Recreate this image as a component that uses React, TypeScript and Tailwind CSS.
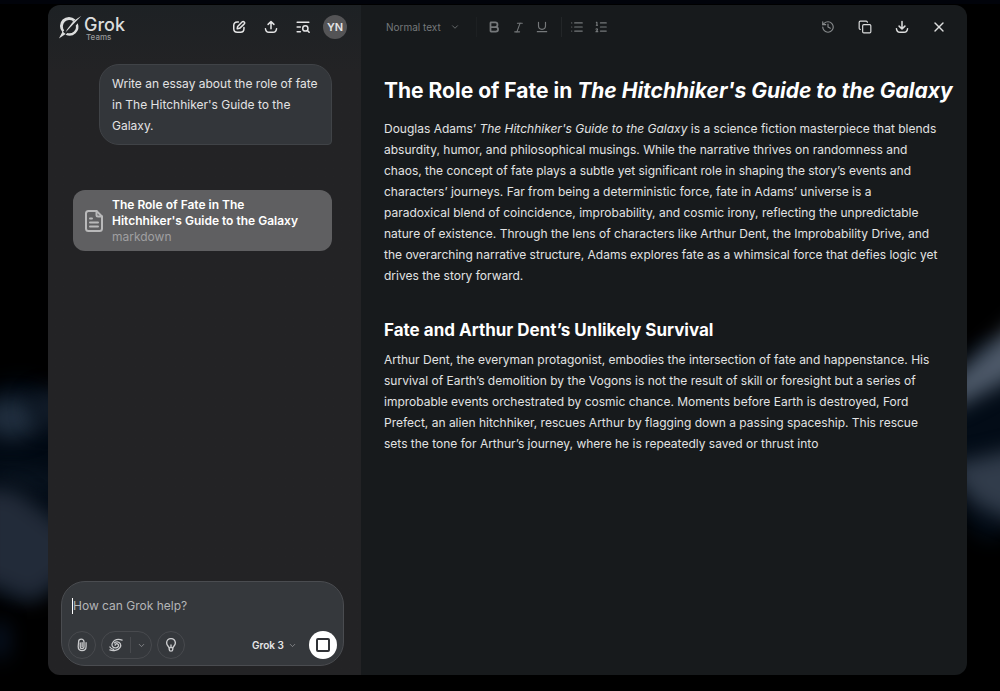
import type { ReactNode } from "react";
import { Bold, ChevronDown, Copy, History, Italic, List, ListOrdered, Underline, X } from "lucide-react";

interface IconButtonProps {
  label: string;
  className?: string;
  children: ReactNode;
}

const IconButton = ({ label, className = "size-4", children }: IconButtonProps) => (
  <button
    type="button"
    aria-label={label}
    className={`flex items-center justify-center shrink-0 ${className}`}
  >
    {children}
  </button>
);

const strokeProps = {
  viewBox: "0 0 24 24",
  fill: "none",
  stroke: "currentColor",
  strokeLinecap: "round" as const,
  strokeLinejoin: "round" as const,
};

const LogoIcon = () => (
  <svg viewBox="0 0 24 24" className="size-6" fill="currentColor" aria-hidden="true">
    <path d="M17.4 4.6A9 9 0 0 0 4.6 17.4L6.2 15.3A6.500 6.500 0 0 1 15.3 6.2Z" />
    <path d="M19.7 8.2A9 9 0 0 1 7.6 19.8L9.3 17.9A6.500 6.500 0 0 0 17.8 10.5Z" />
    <path d="M23.4.7 7.4 17.6 9.2 14.2 15.3 6.2Z" />
    <path d="M.9 23.4 4.6 16.6 7.6 19Z" />
  </svg>
);

const ComposeIcon = () => (
  <svg {...strokeProps} strokeWidth="2.6" className="size-3.5">
    <path d="M11 3.500H9C5 3.500 3 5.500 3 9.500V15C3 19 5 21 9 21H14.500C18.500 21 20.500 19 20.500 15V13" />
    <path d="M9 15 9.700 11 17.200 3.500C18.300 2.400 20 2.500 20.900 3.400S21.800 5.900 20.700 7L13 14.300Z" />
  </svg>
);

const ShareIcon = () => (
  <svg {...strokeProps} strokeWidth="2.6" className="size-3.5">
    <path d="M12 15V3M7 7.500 12 2.500 17 7.500" />
    <path d="M2.500 15C3 19.500 4.500 21 8.500 21H15.500C19.500 21 21 19.500 21.500 15" />
  </svg>
);

const DownloadIcon = () => (
  <svg {...strokeProps} strokeWidth="2.6" className="size-3.5">
    <path d="M12 2.500V15M7 10.500 12 15.500 17 10.500" />
    <path d="M2.500 15C3 19.500 4.500 21 8.500 21H15.500C19.500 21 21 19.500 21.500 15" />
  </svg>
);

const HistorySearchIcon = () => (
  <svg {...strokeProps} strokeWidth="2.6" className="size-3.5">
    <path d="M2 4H22M2 12H7.500M2 20H7.500" />
    <circle cx="16" cy="14.500" r="4.500" />
    <path d="M19.500 18 22.500 21" />
  </svg>
);

const DocumentIcon = () => (
  <svg {...strokeProps} viewBox="0 0 20 24" strokeWidth="2" className="h-6 w-5">
    <path d="M12.500 2H4.500A2.500 2.500 0 0 0 2 4.500V19.500A2.500 2.500 0 0 0 4.500 22H15.500A2.500 2.500 0 0 0 18 19.500V7.500Z" />
    <path d="M12.500 2V6A1.500 1.500 0 0 0 14 7.500H18" />
    <path d="M6 9.500H8M6 13.500H14M6 17.500H14" />
  </svg>
);

const PaperclipIcon = () => (
  <svg {...strokeProps} strokeWidth="2.2" className="size-3.5">
    <path d="M9 8.500V15A3.200 3.200 0 0 0 15.400 15V6.500A4.600 4.600 0 0 0 6.200 6.500L5.500 14.500C5.500 18.500 8 21.500 12 21.500S19 18.500 19 14.500V8" />
    <path d="M12.200 8V15" />
  </svg>
);

const SpiralIcon = () => (
  <svg {...strokeProps} strokeWidth="2.2" className="size-3.5">
    <path d="M22.500 3.500C16 1.500 9 3 6 8.500C3.500 13 7 17.500 12 17C16 16.500 17.500 12.500 15.500 10.700C13.500 9 10.500 10 10.500 12.500" />
    <path d="M1.500 20.500C7 22.500 15.500 22 19 16C21.800 11.500 19 7 14.500 6.500C12.500 6.400 10.500 7 9.300 8.500" />
    <path d="M1.500 15.500C3 18 5.500 19.200 8 19.500" />
  </svg>
);

const BulbIcon = () => (
  <svg {...strokeProps} strokeWidth="2.4" className="size-3.5">
    <path d="M8.500 16.500C8.500 14.500 4.500 13 4.500 8.500A7.500 7.500 0 0 1 19.500 8.500C19.500 13 15.500 14.500 15.500 16.500Z" />
    <path d="M9 17V19.500A3 3 0 0 0 15 19.500V17M12 16V12" />
  </svg>
);

const Clouds = () => (
  <svg
    viewBox="0 0 1000 691"
    preserveAspectRatio="none"
    className="absolute inset-0 size-full"
    aria-hidden="true"
  >
    <defs>
      <filter
        id="haze"
        x="-100%"
        y="-100%"
        width="300%"
        height="300%"
        colorInterpolationFilters="sRGB"
      >
        <feGaussianBlur stdDeviation="10" />
      </filter>
    </defs>
    <ellipse cx="20" cy="490" rx="70" ry="110" fill="#020a14" filter="url(#haze)" />
    <ellipse cx="12" cy="418" rx="28" ry="20" fill="#202e3e" filter="url(#haze)" />
    <ellipse cx="50" cy="408" rx="20" ry="18" fill="#121c29" filter="url(#haze)" />
    <path d="M-20 470H10L60 478V490L30 484Z" fill="#0f1b28" filter="url(#haze)" />
    <path d="M-20 488 15 490 75 535V570L32 602-20 580Z" fill="#222b39" filter="url(#haze)" />
    <ellipse cx="0" cy="640" rx="9" ry="20" fill="#081426" filter="url(#haze)" />
    <ellipse cx="990" cy="440" rx="40" ry="100" fill="#030c17" filter="url(#haze)" />
    <path d="M945 385 1025 314V372L950 410Z" fill="#4e5a6a" filter="url(#haze)" />
    <path d="M945 466 1030 446V528L975 504Z" fill="#313c4b" filter="url(#haze)" />
    <rect width="1000" height="4" fill="#01030a" />
  </svg>
);

const ChatHeader = () => (
  <header className="flex items-center justify-between h-11 pl-2.5 pr-3.5">
    <div className="flex items-center gap-0.5 text-[#dcdddd]">
      <LogoIcon />
      <div className="flex flex-col pt-1">
        <span className="text-lg leading-4 font-medium">Grok</span>
        <span className="pl-0.5 text-[8px] leading-2 font-medium text-[#97989a]">Teams</span>
      </div>
    </div>

    <div className="flex items-center gap-4 text-[#e4e4e5]">
      <IconButton label="New chat">
        <ComposeIcon />
      </IconButton>
      <IconButton label="Share">
        <ShareIcon />
      </IconButton>
      <IconButton label="Search history">
        <HistorySearchIcon />
      </IconButton>
      <button
        type="button"
        className="-ml-1 size-6 rounded-full bg-[#545456] text-[11px] font-semibold"
      >
        YN
      </button>
    </div>
  </header>
);

const Composer = () => (
  <form className="m-[9px] ml-[13px] mr-[17px] p-1.5 rounded-3xl border border-[#4a4c50] bg-[#35383c]">
    <div className="relative h-[43px] px-[5px] pt-2">
      <span className="absolute left-1 top-2.5 h-4 w-px bg-white" />
      <textarea
        aria-label="Message"
        placeholder="How can Grok help?"
        rows={1}
        className="block w-full resize-none bg-transparent text-xs leading-5 text-white outline-none placeholder:text-[#b4b5b7]"
      />
    </div>

    <div className="flex items-center gap-[5px] text-[#c9cacc]">
      <IconButton label="Attach file" className="size-7 rounded-full border border-[#484a4e]">
        <PaperclipIcon />
      </IconButton>
      <div className="flex items-center h-7 rounded-full border border-[#484a4e]">
        <IconButton label="DeepSearch" className="w-7">
          <SpiralIcon />
        </IconButton>
        <span className="h-4 w-px bg-[#484a4e]" />
        <IconButton label="Search options" className="w-5 text-[#97989b]">
          <ChevronDown size={9} />
        </IconButton>
      </div>
      <IconButton label="Think" className="size-7 rounded-full border border-[#484a4e]">
        <BulbIcon />
      </IconButton>

      <div className="flex items-center gap-1 ml-auto mr-[7px]">
        <select
          aria-label="Model"
          className="appearance-none bg-transparent text-[10px] font-semibold text-[#e6e6e7] outline-none"
        >
          <option>Grok 3</option>
        </select>
        <ChevronDown size={9} className="text-[#97989b]" />
      </div>
      <IconButton label="Stop" className="size-7 rounded-full bg-white">
        <span className="size-3.5 rounded-xs border-2 border-[#303236]" />
      </IconButton>
    </div>
  </form>
);

const Chat = () => (
  <section className="flex flex-col w-[313px] shrink-0 bg-linear-to-b from-[#1d2124] to-[#232325] to-10%">
    <ChatHeader />

    {/* conversation */}
    <div className="flex flex-col flex-1 pt-[15px] pl-[25px] pr-[29px]">
      <p className="self-end w-[233px] pl-3 pr-2 py-2 rounded-[20px] rounded-br-sm border border-[#404347] bg-[#33363a] text-xs leading-[21px] text-[#e3e3e4]">
        Write an essay about the role of fate in The Hitchhiker's Guide to the Galaxy.
      </p>

      <button
        type="button"
        className="flex items-center gap-2 mt-[45px] pl-[11px] pr-4 pt-[7px] pb-1.5 rounded-xl bg-[#5f5f61] text-left"
      >
        <span className="shrink-0 text-[#b9b9ba]">
          <DocumentIcon />
        </span>
        <span className="text-xs leading-4">
          <span className="block font-semibold text-white">
            The Role of Fate in The Hitchhiker's Guide to the Galaxy
          </span>
          <span className="block text-[#a0a0a1]">markdown</span>
        </span>
      </button>
    </div>

    <Composer />
  </section>
);

const Toolbar = () => (
  <header className="flex items-center justify-between h-11 pl-[25px] pr-5">
    <div className="flex items-center text-[#75787a]">
      <select
        aria-label="Text style"
        className="appearance-none bg-transparent text-[10px] outline-none"
      >
        <option>Normal text</option>
      </select>
      <ChevronDown size={10} className="ml-[9px]" />
      <span className="ml-4 mr-2.5 h-5 w-px bg-[#1d2022]" />
      <div className="flex items-center gap-2.5">
        <IconButton label="Bold" className="size-3.5">
          <Bold size={14} strokeWidth={3} />
        </IconButton>
        <IconButton label="Italic" className="size-3.5">
          <Italic size={13} />
        </IconButton>
        <IconButton label="Underline" className="size-3.5">
          <Underline size={14} />
        </IconButton>
      </div>
      <span className="ml-3 mr-2 h-5 w-px bg-[#232628]" />
      <div className="flex items-center gap-2.5">
        <IconButton label="Bulleted list" className="size-3.5">
          <List size={14} />
        </IconButton>
        <IconButton label="Numbered list" className="size-3.5">
          <ListOrdered size={14} />
        </IconButton>
      </div>
    </div>

    <div className="flex items-center gap-[21px] text-[#dddede]">
      <IconButton label="Version history" className="size-4 text-[#888b8d]">
        <History size={14} />
      </IconButton>
      <IconButton label="Copy">
        <Copy size={14} />
      </IconButton>
      <IconButton label="Download">
        <DownloadIcon />
      </IconButton>
      <IconButton label="Close">
        <X size={16} />
      </IconButton>
    </div>
  </header>
);

const Essay = () => (
  <article className="pl-[23px] pr-2 pt-7 text-xs leading-[21px] text-[#e2e3e3]">
    <h1 className="text-[21px] leading-7 font-bold text-white">
      The Role of Fate in <em>The Hitchhiker's Guide to the Galaxy</em>
    </h1>
    <p className="mt-[13px] pr-[19px]">
      Douglas Adams’ <em>The Hitchhiker's Guide to the Galaxy</em> is a science fiction masterpiece
      that blends absurdity, humor, and philosophical musings. While the narrative thrives on
      randomness and chaos, the concept of fate plays a subtle yet significant role in shaping the
      story’s events and characters’ journeys. Far from being a deterministic force, fate in Adams’
      universe is a paradoxical blend of coincidence, improbability, and cosmic irony, reflecting
      the unpredictable nature of existence. Through the lens of characters like Arthur Dent, the
      Improbability Drive, and the overarching narrative structure, Adams explores fate as a
      whimsical force that defies logic yet drives the story forward.
    </p>

    <h2 className="mt-[30px] text-[17px] leading-7 font-bold text-white">
      Fate and Arthur Dent’s Unlikely Survival
    </h2>
    <p className="mt-[5px] pr-[19px]">
      Arthur Dent, the everyman protagonist, embodies the intersection of fate and happenstance. His
      survival of Earth’s demolition by the Vogons is not the result of skill or foresight but a
      series of improbable events orchestrated by cosmic chance. Moments before Earth is destroyed,
      Ford Prefect, an alien hitchhiker, rescues Arthur by flagging down a passing spaceship. This
      rescue sets the tone for Arthur’s journey, where he is repeatedly saved or thrust into
    </p>
  </article>
);

const App = () => {
  return (
    <div className="relative flex min-h-screen pt-[5px] pb-4 pl-12 pr-[33px] bg-black font-['Inter',sans-serif]">
      <Clouds />
      <main className="relative flex flex-1 rounded-xl overflow-hidden">
        <Chat />
        <section className="flex-1 min-w-0 bg-[#171a1c]">
          <Toolbar />
          <Essay />
        </section>
      </main>
    </div>
  );
};

export default App;
